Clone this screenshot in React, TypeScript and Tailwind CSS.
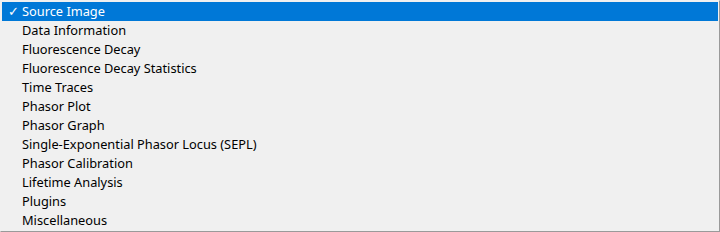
import React from 'react';

const items = [
  'Source Image',
  'Data Information',
  'Fluorescence Decay',
  'Fluorescence Decay Statistics',
  'Time Traces',
  'Phasor Plot',
  'Phasor Graph',
  'Single-Exponential Phasor Locus (SEPL)',
  'Phasor Calibration',
  'Lifetime Analysis',
  'Plugins',
  'Miscellaneous',
];

export default function App() {
  const selected = 0;
  return (
    <div
      className="h-[232px] w-[720px] border-t border-l border-t-[#f0f0f0] border-l-[#f0f0f0] border-r border-b border-r-[#9a9a9a] border-b-[#9a9a9a] bg-[#f0f0f0] p-px"
      style={{ fontFamily: '"Noto Sans", "Open Sans", sans-serif' }}
    >
      <ul className="flex flex-col">
        {items.map((label, i) => {
          const active = i === selected;
          return (
            <li
              key={label}
              className={`flex h-[19px] items-center pb-px text-[12.8px] leading-none ${
                active ? 'bg-[#0078d7] text-white' : 'text-black'
              }`}
            >
              <span className="flex w-5 justify-center pl-[2px] text-[13px]">{active ? '✓' : ''}</span>
              <span>{label}</span>
            </li>
          );
        })}
      </ul>
    </div>
  );
}
